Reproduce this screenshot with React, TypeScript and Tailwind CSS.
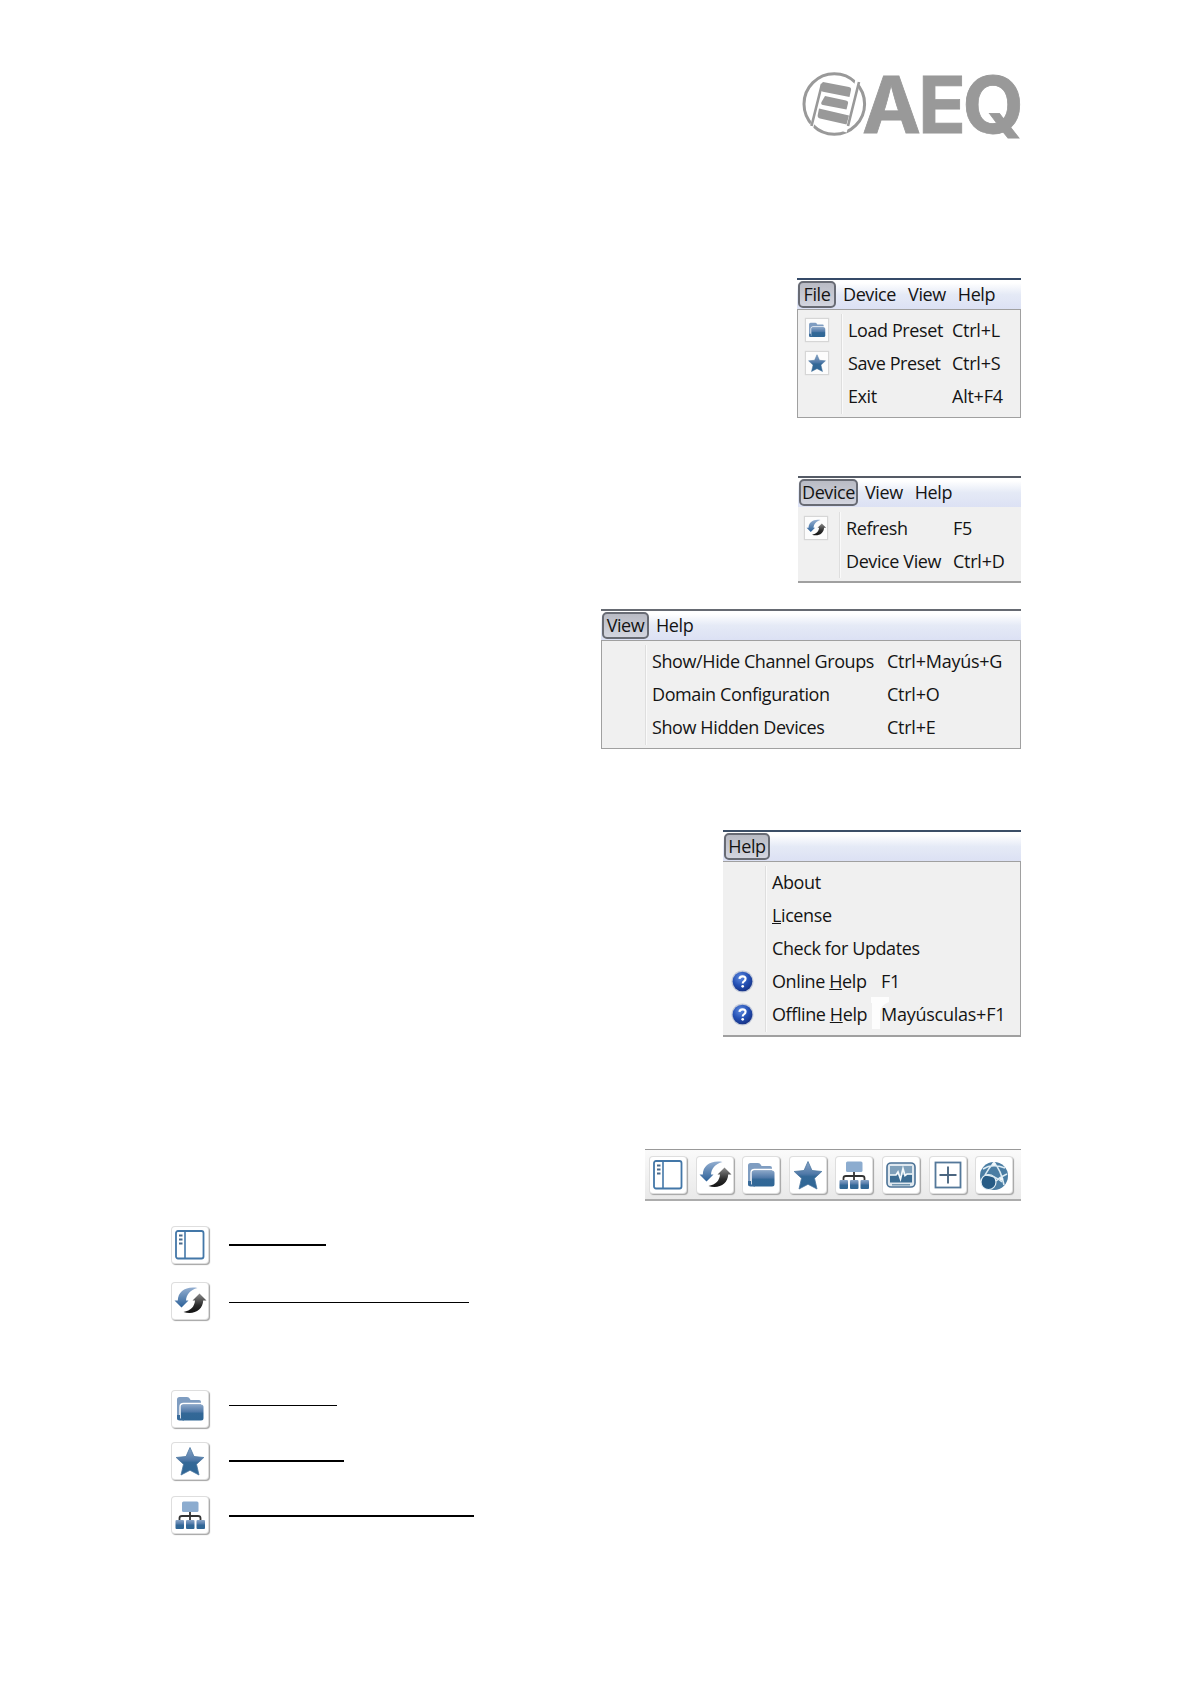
import type { ReactNode } from 'react';

type MenuEntry = {
  label: ReactNode;
  shortcut?: string;
  icon?: ReactNode;
};

function Gradients() {
  return (
    <svg className="absolute size-0" aria-hidden="true">
      <defs>
        <linearGradient id="blue" x1="0" y1="0" x2="0" y2="1">
          <stop offset="0" stopColor="#8aa6c8" />
          <stop offset="0.45" stopColor="#5079a8" />
          <stop offset="0.55" stopColor="#336897" />
          <stop offset="1" stopColor="#2f6695" />
        </linearGradient>
        <linearGradient id="arrow" x1="0" y1="0" x2="0" y2="1">
          <stop offset="0" stopColor="#93aed0" />
          <stop offset="1" stopColor="#2b6098" />
        </linearGradient>
        <linearGradient id="dark" x1="0" y1="0" x2="0" y2="1">
          <stop offset="0" stopColor="#8b8b8b" />
          <stop offset="0.6" stopColor="#2c2c2c" />
          <stop offset="1" stopColor="#111111" />
        </linearGradient>
        <radialGradient id="help" cx="0.4" cy="0.3" r="0.75">
          <stop offset="0" stopColor="#5f8be0" />
          <stop offset="0.55" stopColor="#2450b4" />
          <stop offset="1" stopColor="#152f80" />
        </radialGradient>
      </defs>
    </svg>
  );
}

/* Icons, all on a 36x36 grid */
function PanelIcon() {
  return (
    <svg viewBox="0 0 36 36" className="block size-full" fill="none">
      <rect x="4" y="4" width="27.5" height="27.5" rx="2" stroke="#4377a8" strokeWidth="1.8" />
      <path d="M13 4v27" stroke="#4377a8" strokeWidth="1.6" />
      <path d="M7 8.5h3.500M7 12.500h3.500M7 16.500h3.500" stroke="#496a8c" strokeWidth="2" />
    </svg>
  );
}

function RefreshIcon() {
  return (
    <svg viewBox="0 0 36 36" className="block size-full">
      <path d="M25.500 5C14 3 6 8.500 5.800 17.500H2.500L9.500 24.500 16.500 17.500H14C14.500 11.500 18 7 25.500 5Z" fill="url(#arrow)" />
      <path d="M11.500 29C22 32.500 31 26.500 31.200 17.500H34.500L27.500 10.500 20.500 17.500H23C22.500 23.500 19 27.500 11.500 29Z" fill="url(#dark)" />
    </svg>
  );
}

function FolderIcon() {
  return (
    <svg viewBox="0 0 36 36" className="block size-full">
      <path d="M5 27V8.500Q5 6 7.500 6H15Q17 6 18 8L18.500 9H27Q29 9 29 11V27Q29 29 27 29H7Q5 29 5 27Z" fill="#7f9dc1" />
      <path d="M8 27V16Q8 12.500 11.500 12.500H31" fill="none" stroke="#ffffff" strokeWidth="1.3" />
      <rect x="9" y="13.500" width="22.500" height="16" rx="2.500" fill="url(#blue)" />
      <path d="M5 24V27.500Q5 29.500 7.500 29.500H12V28H8V24Z" fill="#386b9a" />
    </svg>
  );
}

function StarIcon() {
  return (
    <svg viewBox="0 0 36 36" className="block size-full">
      <path d="M18 4.500 22 13.500 31.800 14.500 24.500 21.300 27 32 18 27.300 9 32 11.500 21.300 4.200 14.500 14 13.500Z" fill="url(#blue)" stroke="#4a769f" strokeWidth="0.800" strokeLinejoin="round" />
    </svg>
  );
}

function DomainIcon() {
  return (
    <svg viewBox="0 0 36 36" className="block size-full">
      <rect x="10" y="4.500" width="16.500" height="10.500" rx="1.500" fill="#8caccf" />
      <path d="M18 15V24M7.500 24V21Q7.500 19 10 19H26Q28.500 19 28.500 21V24" fill="none" stroke="#333333" strokeWidth="1.800" />
      <rect x="3.500" y="23" width="8.500" height="9" rx="1" fill="url(#blue)" />
      <rect x="14" y="23" width="8.500" height="9" rx="1" fill="url(#blue)" />
      <rect x="24.500" y="23" width="8.500" height="9" rx="1" fill="url(#blue)" />
    </svg>
  );
}

function MonitorIcon() {
  return (
    <svg viewBox="0 0 36 36" className="block size-full">
      <rect x="4" y="6" width="28" height="24" rx="4" fill="#dfe8ef" stroke="#4b7296" strokeWidth="1.600" />
      <rect x="7" y="9" width="22" height="8.500" fill="#7fa0ba" />
      <rect x="7" y="17.500" width="22" height="8" fill="#3c6d93" />
      <path d="M7 18H13L15 15 17.500 22 20 11.500 22 18.500 24 17H29" fill="none" stroke="#f4fafc" strokeWidth="1.700" />
      <path d="M9 27.800H27" stroke="#55809f" strokeWidth="1.200" />
    </svg>
  );
}

function GridIcon() {
  return (
    <svg viewBox="0 0 36 36" className="block size-full" fill="none">
      <rect x="5.500" y="5.500" width="25" height="25" stroke="#54789a" strokeWidth="1.800" />
      <path d="M18 9.500V26.500M9.500 18H26.500" stroke="#4b6680" strokeWidth="1.900" />
    </svg>
  );
}

function GlobeIcon() {
  return (
    <svg viewBox="0 0 36 36" className="block size-full">
      <circle cx="18" cy="19" r="14" fill="#4a7da3" />
      <path d="M7 12Q16 6 29 11M18 5.500Q25 13 28 28M18 5.500Q12 12 9 18M31 17Q24 20 20 24" fill="none" stroke="#dcebf3" strokeWidth="1.600" />
      <circle cx="12.500" cy="25" r="7.500" fill="#265b85" stroke="#e3eff5" strokeWidth="1.200" />
      <path d="M9 18Q18 18 26 25" fill="none" stroke="#dcebf3" strokeWidth="1.400" />
      <circle cx="18" cy="7" r="1.800" fill="#f2f8fb" />
      <circle cx="25.500" cy="22" r="1.800" fill="#f2f8fb" />
    </svg>
  );
}

function HelpBadge() {
  return (
    <div className="size-[23px]">
      <svg viewBox="0 0 24 24" className="block size-full">
        <circle cx="12" cy="12" r="11.500" fill="#c3cad9" />
        <circle cx="12" cy="12" r="10.300" fill="url(#help)" />
        <path d="M8.800 9.300Q9 6.600 12 6.600 15.200 6.600 15.200 9.200 15.200 10.800 13.500 11.800 12.200 12.600 12.200 14" fill="none" stroke="#ffffff" strokeWidth="2.200" />
        <circle cx="12.200" cy="17" r="1.400" fill="#ffffff" />
      </svg>
    </div>
  );
}

function SmallTile({ children }: { children: ReactNode }) {
  return (
    <div className="size-[22px] bg-[#fcfcfc] shadow-[0_0_1px_1px_#d6d6d6]">{children}</div>
  );
}

function Tile({ children }: { children: ReactNode }) {
  return (
    <div className="size-[36px] shrink-0 rounded-[3px] bg-white shadow-[0_0_0_1px_#dedede,1px_1px_1px_1px_#a3a3a3]">
      {children}
    </div>
  );
}

type MenuProps = {
  titles: string[];
  entries: MenuEntry[];
  className: string;
  barClass: string;
  activeClass: string;
  gutterClass: string;
  labelClass: string;
  bodyClass: string;
};

function Menu({ titles, entries, className, barClass, activeClass, gutterClass, labelClass, bodyClass }: MenuProps) {
  return (
    <div className={`flex flex-col text-[18px] leading-[24px] tracking-[-0.4px] text-[#141414] whitespace-nowrap ${className}`}>
      <div className={`flex h-[31px] shrink-0 items-start border-t-2 bg-linear-to-b from-white from-10% via-[#e5eaf6] via-50% to-[#dce1f4] pl-px pt-px ${barClass}`}>
        <div className={`flex h-[27px] items-center justify-center rounded-[5px] border-2 border-[#686b74] bg-linear-to-b from-[#b9bbc4] to-[#d3d5df] pb-[2px] ${activeClass}`}>
          {titles[0]}
        </div>
        {titles.slice(1).map((title) => (
          <div key={title} className="ml-[12px] flex h-[25px] items-center [&:nth-child(2)]:ml-[7px]">
            {title}
          </div>
        ))}
      </div>
      <div className={`flex flex-1 border-[#a0a0a0] bg-[#f0f0f0] ${bodyClass}`}>
        <div className={`mb-[3px] shrink-0 border-r border-[#dedede] shadow-[1px_0_0_#fafafa] ${gutterClass}`}>
          {entries.map((entry, i) => (
            <div key={i} className="flex h-[33.200px] items-center pb-px">{entry.icon}</div>
          ))}
        </div>
        <div className="flex flex-col">
          {entries.map((entry, i) => (
            <div key={i} className="flex h-[33.200px] items-center pb-[2px]">
              <span className={`shrink-0 ${labelClass}`}>{entry.label}</span>
              <span className="tracking-[-0.25px]">{entry.shortcut}</span>
            </div>
          ))}
        </div>
      </div>
    </div>
  );
}

function Logo() {
  return (
    <svg width="222" height="72" viewBox="0 0 222 72" className="block overflow-visible">
      <circle cx="35.300" cy="34" r="30.300" fill="none" stroke="#999999" strokeWidth="3" />
      <path d="M10.500 66 24 10M46 62 59.500 4" stroke="#ffffff" strokeWidth="3.500" />
      <path d="M12.500 56 23 14M49 56 60 12" stroke="#999999" strokeWidth="2.600" />
      <path d="M24 12 50 17Q52.500 17.500 52 20L50.500 27 24 21.800Q21 21 21.500 18.500L22 14Z" fill="#999999" />
      <path d="M26 26 47 30.500Q49.500 31.100 49 33.500L47.500 39.500 24 35Q21.500 34.500 22.500 32Z" fill="#999999" />
      <path d="M20 38.500 50 45.500 47.500 54.500 21 48.500Q18 47.500 18.800 44.500Z" fill="#999999" />
      <text x="63 119 163.500" y="63" fontFamily="Inter, sans-serif" fontWeight="700" fontSize="79" fill="#999999" stroke="#999999" strokeWidth="0.800">AEQ</text>
    </svg>
  );
}

const fileEntries: MenuEntry[] = [
  { label: 'Load Preset', shortcut: 'Ctrl+L', icon: <SmallTile><FolderIcon /></SmallTile> },
  { label: 'Save Preset', shortcut: 'Ctrl+S', icon: <SmallTile><StarIcon /></SmallTile> },
  { label: 'Exit', shortcut: 'Alt+F4' },
];

const deviceEntries: MenuEntry[] = [
  { label: 'Refresh', shortcut: 'F5', icon: <SmallTile><RefreshIcon /></SmallTile> },
  { label: 'Device View', shortcut: 'Ctrl+D' },
];

const viewEntries: MenuEntry[] = [
  { label: 'Show/Hide Channel Groups', shortcut: 'Ctrl+Mayús+G' },
  { label: 'Domain Configuration', shortcut: 'Ctrl+O' },
  { label: 'Show Hidden Devices', shortcut: 'Ctrl+E' },
];

const helpEntries: MenuEntry[] = [
  { label: 'About' },
  { label: <><u>L</u>icense</> },
  { label: 'Check for Updates' },
  { label: <>Online <u>H</u>elp</>, shortcut: 'F1', icon: <HelpBadge /> },
  { label: <>Offline <u>H</u>elp</>, shortcut: 'Mayúsculas+F1', icon: <HelpBadge /> },
];

export default function App() {
  return (
    <div className="relative h-[1684px] w-[1190px] overflow-hidden bg-white font-['Open_Sans','Noto_Sans',sans-serif]">
      <Gradients />
      <div className="flex flex-col items-end pr-[169px] pt-[70px]">
        <div className="h-[70px]"><Logo /></div>

        <Menu
          titles={['File', 'Device', 'View', 'Help']}
          entries={fileEntries}
          className="mt-[138px] h-[139px] w-[224px]"
          barClass="border-[#354a68]"
          activeClass="w-[38px]"
          bodyClass="border pt-[4px]"
          gutterClass="w-[44px] pl-[8px]"
          labelClass="ml-[6px] w-[104px]"
        />
        <Menu
          titles={['Device', 'View', 'Help']}
          entries={deviceEntries}
          className="mt-[59px] h-[106px] w-[223px]"
          barClass="border-[#555b66]"
          activeClass="w-[59px]"
          bodyClass="border-b-2 pt-[5px]"
          gutterClass="w-[42px] pl-[7px]"
          labelClass="ml-[6px] w-[107px]"
        />
        <Menu
          titles={['View', 'Help']}
          entries={viewEntries}
          className="mt-[27px] h-[138px] w-[420px]"
          barClass="border-[#666a72]"
          activeClass="w-[47px]"
          bodyClass="border pt-[4px]"
          gutterClass="w-[44px]"
          labelClass="ml-[6px] w-[235px]"
        />
        <div className="relative mt-[83px]">
          <Menu
            titles={['Help']}
            entries={helpEntries}
            className="h-[205px] w-[298px]"
            barClass="border-[#3c4e66]"
            activeClass="w-[46px]"
            bodyClass="border-t border-r border-b-2 pt-[4px]"
            gutterClass="w-[43px] pl-[8px]"
            labelClass="ml-[6px] w-[109px]"
          />
          {/* Pale notch between the label and shortcut columns */}
          <svg className="absolute left-[148px] top-[167px] h-[32px] w-[18px]" viewBox="0 0 18 32">
            <path d="M0 0H18V5Q10 8 9 14V32H1V6H0Z" fill="#fdfdfd" />
          </svg>
        </div>

        {/* Toolbar */}
        <div className="mt-[114px] flex h-[52px] w-[376px] items-center gap-[10.600px] border-t border-b-2 border-t-[#999999] border-b-[#acacac] bg-linear-to-b from-[#fafafa] to-[#e9e9e9] pl-[5px]">
          <Tile><PanelIcon /></Tile>
          <Tile><RefreshIcon /></Tile>
          <Tile><FolderIcon /></Tile>
          <Tile><StarIcon /></Tile>
          <Tile><DomainIcon /></Tile>
          <Tile><MonitorIcon /></Tile>
          <Tile><GridIcon /></Tile>
          <Tile><GlobeIcon /></Tile>
        </div>
      </div>

      {/* Icon legend */}
      <div className="flex flex-col pl-[172px] pt-[26px]">
        <div className="flex h-[56px] items-start">
          <Tile><PanelIcon /></Tile>
          <div className="ml-[21px] mt-[17px] h-[2px] w-[97px] bg-black" />
        </div>
        <div className="flex h-[108px] items-start">
          <Tile><RefreshIcon /></Tile>
          <div className="ml-[21px] mt-[19px] h-px w-[240px] bg-black" />
        </div>
        <div className="flex h-[52px] items-start">
          <Tile><FolderIcon /></Tile>
          <div className="ml-[21px] mt-[14px] h-px w-[108px] bg-black" />
        </div>
        <div className="flex h-[54px] items-start">
          <Tile><StarIcon /></Tile>
          <div className="ml-[21px] mt-[17px] h-[2px] w-[115px] bg-black" />
        </div>
        <div className="flex h-[54px] items-start">
          <Tile><DomainIcon /></Tile>
          <div className="ml-[21px] mt-[18px] h-[2px] w-[245px] bg-black" />
        </div>
      </div>
    </div>
  );
}
